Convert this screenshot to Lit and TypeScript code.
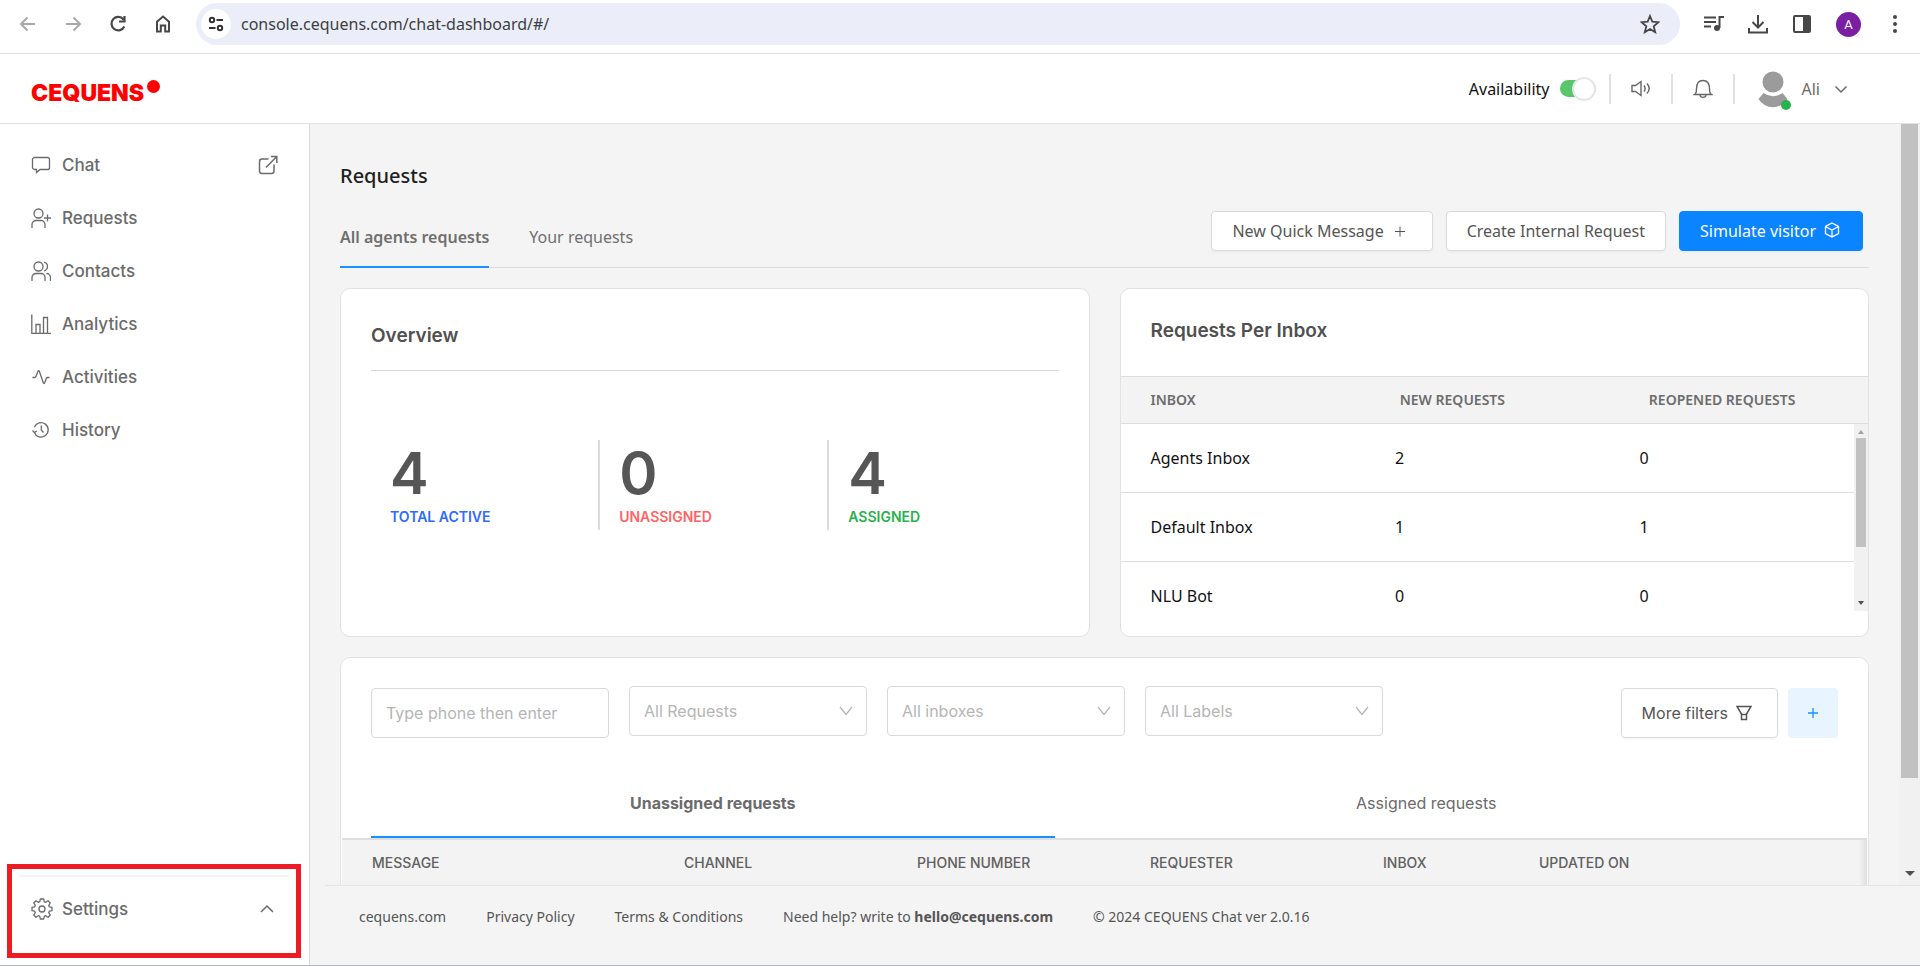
import { LitElement, html, css, svg, TemplateResult } from "lit";
import { customElement, state } from "lit/decorators.js";

const icon = (cls: string, size: number, body: TemplateResult) =>
  html`<svg class=${cls} width=${size} height=${size} viewBox="0 0 ${size} ${size}" aria-hidden="true">${body}</svg>`;

const navIcons: Record<string, TemplateResult> = {
  chat: svg`<path d="M3.500 2.500h13a2 2 0 0 1 2 2v8a2 2 0 0 1-2 2H9L5.500 17.500V14.500h-2a2 2 0 0 1-2-2v-8a2 2 0 0 1 2-2z"/>`,
  requests: svg`<circle cx="7.500" cy="5.500" r="4.500"/><path d="M1 20v-3.500a4 4 0 0 1 4-4h5a4 4 0 0 1 4 4V20M16.500 6.500v7M13 10h7"/>`,
  contacts: svg`<circle cx="7.500" cy="5.500" r="4.500"/><path d="M1 20v-3.500a4 4 0 0 1 4-4h5a4 4 0 0 1 4 4V20M13 1.200a4.400 4.400 0 0 1 0 8.600M15.500 12.500a4 4 0 0 1 4 4V20"/>`,
  analytics: svg`<path d="M.8 .5v19H20M5 19.500v-9h4v9M12.500 19.500V3.500h4v16"/>`,
  activities: svg`<path d="M1.500 10.500h2.200c.8 0 1-.4 1.300-1.200L7 4.200c.3-.8 1-.8 1.300 0l4 11.600c.3.900 1.100.9 1.400 0l1.600-4.300c.3-.8.700-1 1.400-1h1.800"/>`,
  history: svg`<path d="M3.300 12.500A7.200 7.200 0 1 0 3.300 7.200M3.300 12.500l-1.800-2.200M3.300 12.500l2.600-1.300M10.300 5.500V10l2.200 2.500"/>`,
  settings: svg`<path d="M9.300 1h3.400l.5 2.700 1.500.6 2.300-1.600 2.300 2.300-1.600 2.300.6 1.500 2.700.5v3.400l-2.700.5-.6 1.500 1.600 2.300-2.300 2.300-2.300-1.600-1.500.6-.5 2.700H9.300l-.5-2.700-1.500-.6L5 19.300 2.700 17l1.600-2.300-.6-1.500L1 12.700V9.300l2.700-.5.600-1.500L2.700 5 5 2.700l2.300 1.600 1.500-.6z" stroke-linejoin="round"/><circle cx="11" cy="11" r="3"/>`,
};

const navItems = [
  { id: "chat", label: "Chat", external: true },
  { id: "requests", label: "Requests" },
  { id: "contacts", label: "Contacts" },
  { id: "analytics", label: "Analytics" },
  { id: "activities", label: "Activities" },
  { id: "history", label: "History" },
];

const stats = [
  { value: 4, label: "TOTAL ACTIVE", tone: "blue" },
  { value: 0, label: "UNASSIGNED", tone: "red" },
  { value: 4, label: "ASSIGNED", tone: "green" },
];

const inboxes = [
  { name: "Agents Inbox", fresh: 2, reopened: 0 },
  { name: "Default Inbox", fresh: 1, reopened: 1 },
  { name: "NLU Bot", fresh: 0, reopened: 0 },
];

const selects = ["All Requests", "All inboxes", "All Labels"];

const columns = [
  { label: "MESSAGE", cls: "c-message" },
  { label: "CHANNEL", cls: "c-mid" },
  { label: "PHONE NUMBER", cls: "c-mid" },
  { label: "REQUESTER", cls: "c-mid" },
  { label: "INBOX", cls: "c-inbox" },
  { label: "UPDATED ON", cls: "c-updated" },
];

const base = css`
  :host { display: block; }
  * { box-sizing: border-box; }
  button, input, select { font: inherit; color: inherit; margin: 0; }
  button { background: none; border: 0; padding: 0; cursor: pointer; }
  a { color: inherit; text-decoration: none; }
  svg { display: block; flex: none; fill: none; stroke: currentColor; }
`;

@customElement("browser-bar")
class BrowserBar extends LitElement {
  static styles = [base, css`
    .bar { display: flex; align-items: center; height: 54px; padding: 0 17px 5px 18px; background: #fff; border-bottom: 1px solid #dfe1e5; color: #474747; }
    .nav { display: flex; gap: 25px; margin-right: 23px; }
    .off { color: #a9a9a9; }
    .thin { stroke-width: 2; }
    .omni { flex: 1; display: flex; align-items: center; height: 42px; border-radius: 21px; background: #ebeef8; padding: 0 20px 0 5px; }
    .site { width: 30px; height: 30px; border-radius: 50%; background: #fff; display: grid; place-items: center; margin-right: 10px; color: #333; }
    .url { flex: 1; min-width: 0; padding: 0; border: 0; outline: 0; background: none; color: #3c3f43; font: 16px/24px "Noto Sans", sans-serif; }
    .tools { display: flex; align-items: center; gap: 24px; margin-left: 24px; }
    .me { width: 25px; height: 25px; border-radius: 50%; background: #7b1fa2; color: #fff; font: 13px/25px Roboto, sans-serif; text-align: center; }
    .solid { fill: currentColor; stroke: none; }
    .menu { width: 18px; display: grid; justify-items: center; }
  `];

  render() {
    return html`<div class="bar">
      <div class="nav">
        <button class="off" aria-label="Back">${icon("thin", 20, svg`<path d="M17 10H3M9.500 3.500L3 10l6.500 6.500"/>`)}</button>
        <button class="off" aria-label="Forward">${icon("thin", 20, svg`<path d="M3 10h14M10.500 3.500L17 10l-6.500 6.500"/>`)}</button>
        <button aria-label="Reload">${icon("thin", 20, svg`<path d="M15.500 5.500A6.700 6.700 0 1 0 16.300 12.500M16.500 2v5.500H11" stroke-width="2.200"/>`)}</button>
        <button aria-label="Home">${icon("thin", 20, svg`<path d="M4 17.500V7.800l6-5.300 6 5.300v9.700h-3.800v-6H7.800v6z" stroke-width="2"/>`)}</button>
      </div>
      <div class="omni">
        <button class="site" aria-label="Site information">${icon("thin", 18, svg`<circle cx="5" cy="5" r="2.200"/><path d="M9.500 5H16M2 13h6.500"/><circle cx="13" cy="13" r="2.200"/>`)}</button>
        <input class="url" aria-label="Address" .value=${"console.cequens.com/chat-dashboard/#/"} />
        <button aria-label="Bookmark">${icon("", 20, svg`<path d="M10 2l2.300 5.700 6 .5-4.600 4 1.500 6L10 15l-5.200 3.200 1.500-6-4.600-4 6-.5z" stroke-width="1.800"/>`)}</button>
      </div>
      <div class="tools">
        <button aria-label="Media">${icon("thin", 20, svg`<path d="M0 3.500h12M0 8h12M0 12.500h7"/><path d="M15.500 14V3H20" /><circle cx="13" cy="14" r="3" class="solid"/>`)}</button>
        <button aria-label="Downloads">${icon("thin", 20, svg`<path d="M10 1v12M4.500 8l5.500 5.500L15.500 8M1 14v4.500h18V14"/>`)}</button>
        <button aria-label="Side panel">${icon("thin", 20, svg`<rect x="2" y="2" width="16" height="16" rx="1"/><path class="solid" d="M11 2h7v16h-7z"/>`)}</button>
        <button class="me" aria-label="Profile">A</button>
        <button class="menu" aria-label="Menu">${icon("solid", 20, svg`<circle cx="10" cy="3" r="2"/><circle cx="10" cy="10" r="2"/><circle cx="10" cy="17" r="2"/>`)}</button>
      </div>
    </div>`;
  }
}

@customElement("top-header")
class TopHeader extends LitElement {
  static styles = [base, css`
    .head { display: flex; align-items: center; height: 70px; padding: 0 72px 0 31px; background: #fff; border-bottom: 1px solid #e4e4e4; font: 16px/24px "Noto Sans", sans-serif; }
    .logo { display: flex; align-items: flex-start; gap: 3px; margin-right: auto; padding-top: 8px; color: #f00; font: 900 23px/26px Inter, sans-serif; }
    .dot { width: 13px; height: 13px; border-radius: 50%; background: #f00; }
    .avail { display: flex; align-items: center; gap: 10px; margin-right: 13px; color: #111; }
    .switch { appearance: none; width: 36px; height: 17px; border-radius: 9px; background: #bbb; display: flex; align-items: center; justify-content: flex-end; cursor: pointer; }
    .switch:checked { background: #58c76b; }
    .switch::before { content: ""; flex: none; width: 20px; height: 20px; border-radius: 50%; background: #fff; border: 2px solid #e6e6e6; }
    .sep { width: 2px; height: 30px; background: #e0e0e0; }
    .group { display: flex; align-items: center; color: #666; }
    .slot { width: 60px; display: grid; place-items: center; }
    .user { display: flex; align-items: center; margin-left: 19px; color: #6b6b6b; }
    .avatar { position: relative; margin-right: 10px; }
    .online { position: absolute; right: 1px; bottom: -2px; width: 10px; height: 10px; border-radius: 50%; background: #26b34b; }
    .face { fill: #9b9b9b; stroke: none; }
    .down { margin-left: 14px; }
  `];

  render() {
    return html`<header class="head">
      <a class="logo" href="#/">CEQUENS<span class="dot"></span></a>
      <label class="avail">Availability <input class="switch" type="checkbox" role="switch" checked /></label>
      <div class="group">
        <span class="sep"></span>
        <button class="slot" aria-label="Sound">${icon("", 20, svg`<path d="M1 6.500h3.500L10 2.500v14l-5.500-4H1zM13 6.500c1.300 1.800 1.300 4.200 0 6M16 4.500c2.600 3 2.600 7 0 10" stroke-width="1.400"/>`)}</button>
        <span class="sep"></span>
        <button class="slot" aria-label="Notifications">${icon("", 20, svg`<path d="M1.500 15.500c1.700-1 2-3 2-5.500 0-5.500 2-8.500 6.500-8.500s6.500 3 6.500 8.500c0 2.500.3 4.500 2 5.500zM7 16c.3 3.200 5.700 3.200 6 0" stroke-width="1.400"/>`)}</button>
        <span class="sep"></span>
      </div>
      <button class="user">
        <span class="avatar">${icon("face", 38, svg`<circle cx="19" cy="12" r="10.500"/><path d="M9.500 23a16 16 0 0 0 19 0l5 6a17 17 0 0 1-29 0z"/>`)}<span class="online"></span></span>
        Ali ${icon("down", 14, svg`<path d="M1.500 4.500l5.500 5.500 5.500-5.500" stroke-width="1.500"/>`)}
      </button>
    </header>`;
  }
}

@customElement("side-nav")
class SideNav extends LitElement {
  static styles = [base, css`
    :host { display: flex; }
    .side { flex: 1; display: flex; flex-direction: column; justify-content: space-between; padding-top: 14px; background: #fff; border-right: 1px solid #d9d9d9; color: #6b6b6b; font: 500 17px/24px Inter, sans-serif; }
    .list { list-style: none; margin: 0; padding: 0; }
    .item { display: flex; align-items: center; width: 100%; height: 53px; padding: 0 31px; }
    .ico { width: 20px; margin-right: 11px; display: grid; place-items: center; }
    .line { stroke-width: 1.300; }
    .end { margin-left: auto; }
    .mark { height: 94px; margin: 0 8px 7px 7px; padding: 6px 7px; border: 5px solid #ed1c24; }
    .rule { height: 2px; background: #f4f4f4; }
    .settings { display: flex; align-items: center; width: 100%; height: 64px; padding: 0 15px 0 12px; font: inherit; }
  `];

  render() {
    return html`<nav class="side" aria-label="Main">
      <ul class="list">
        ${navItems.map((n) => html`<li><a class="item" href="#/${n.id}">
          <span class="ico">${icon("line", 20, navIcons[n.id])}</span>${n.label}
          ${n.external ? icon("line end", 20, svg`<path d="M10.500 4H4a2.500 2.500 0 0 0-2.500 2.500V16A2.500 2.500 0 0 0 4 18.500h9.500A2.500 2.500 0 0 0 16 16V9.500M13 1.500h5.800V8M18.800 1.500L8 12.500" stroke-width="1.500"/>`) : ""}
        </a></li>`)}
      </ul>
      <div class="mark">
        <div class="rule"></div>
        <button class="settings">
          <span class="ico">${icon("line", 22, navIcons.settings)}</span>Settings
          ${icon("line end", 14, svg`<path d="M1 10l6-6 6 6" stroke-width="1.500"/>`)}
        </button>
      </div>
    </nav>`;
  }
}

@customElement("requests-page")
class RequestsPage extends LitElement {
  @state() private tab = 0;
  static styles = [base, css`
    :host { flex: 1; min-width: 0; display: flex; }
    .page { flex: 1; min-width: 0; padding: 38px 30px 0; font: 16px/24px "Noto Sans", sans-serif; }
    .title { margin: 0; font-weight: 500; font-size: 20px; line-height: 28px; color: #1f1f1f; }
    .bar { display: flex; align-items: flex-end; justify-content: space-between; height: 78px; border-bottom: 1px solid #dcdcdc; }
    .tabs { display: flex; gap: 40px; margin-bottom: -1px; }
    .tab { padding-bottom: 17px; border-bottom: 2px solid transparent; color: #6f6f6f; }
    .tab.on { border-color: #1890ff; font-weight: 600; }
    .actions { display: flex; gap: 13px; padding: 0 6px 16px 0; }
    .btn { display: flex; align-items: center; justify-content: center; gap: 8px; height: 40px; padding: 0 20px; background: #fff; border: 1px solid #d9d9d9; border-radius: 4px; box-shadow: 0 2px 2px rgba(0, 0, 0, 0.03); color: #555; white-space: nowrap; }
    .primary { background: #0a84ff; border-color: #0a84ff; color: #fff; }
    .cards { display: grid; grid-template-columns: 1fr 1fr; gap: 30px; margin-top: 20px; }
    .card { background: #fff; border: 1px solid #e2e2e2; border-radius: 10px; }
    .h2 { margin: 0; font: 600 19px/24px Inter, sans-serif; color: #505050; }
    .overview { padding: 35px 30px; }
    .overview .h2 { padding-bottom: 22px; border-bottom: 1px solid #d9d9d9; }
    .stats { display: grid; grid-template-columns: repeat(3, 1fr); margin: 69px 0 0; }
    .stat { height: 90px; padding: 2px 0 0 19px; border-right: 2px solid #dcdcdc; font-family: Inter, sans-serif; display: flex; flex-direction: column-reverse; justify-content: flex-end; }
    .stat:last-child { border: 0; }
    .num { margin: 0; font-weight: 600; font-size: 58px; line-height: 62px; color: #565656; }
    .lab { font-weight: 600; font-size: 14px; line-height: 26px; }
    .blue { color: #2e6bff; }
    .red { color: #ff6464; }
    .green { color: #26b34b; }
    .inboxes { padding-bottom: 25px; }
    .inboxes .h2 { padding: 30px 30px 33px; }
    table { width: 100%; border-collapse: separate; border-spacing: 0; table-layout: fixed; }
    th, td { text-align: left; padding: 0 0 0 30px; font-weight: 400; }
    .heads th { height: 48px; background: #f3f3f3; border: 1px solid #dcdcdc; border-width: 1px 0; font-weight: 600; font-size: 14px; color: #6c6c6c; }
    .scroll { display: flex; height: 187px; overflow: hidden; color: #111; }
    .scroll table { align-self: flex-start; }
    .scroll td { height: 69px; border-bottom: 1px solid #dedede; }
    .mini { flex: none; width: 14px; display: flex; flex-direction: column; align-items: center; justify-content: space-between; padding: 6px 0; background: #f1f1f1; }
    .thumb { width: 10px; height: 109px; margin: 0 0 auto; background: #c1c1c1; }
    .up, .dn { border: 3px solid transparent; border-top: 0; border-bottom: 4px solid #a3a3a3; margin-bottom: 4px; }
    .dn { border-bottom: 0; border-top: 4px solid #505050; margin-bottom: 0; }
    .list { margin-top: 20px; padding-top: 28px; border-radius: 10px 10px 0 0; font-family: Inter, sans-serif; }
    .filters { display: flex; align-items: flex-start; gap: 20px; padding: 0 30px; }
    .field { position: relative; width: 238px; color: #b5b5b5; }
    .box { display: block; width: 100%; height: 50px; padding: 0 14px; background: #fff; border: 1px solid #d9d9d9; border-radius: 4px; appearance: none; outline: 0; }
    .box::placeholder { color: #b5b5b5; opacity: 1; }
    .caret { position: absolute; right: 14px; top: 18px; pointer-events: none; stroke-width: 1.300; }
    .low { margin-top: 2px; }
    .right { display: flex; gap: 10px; margin-left: auto; }
    .more { height: 50px; padding-right: 25px; }
    .add { width: 50px; height: 50px; border-radius: 4px; background: #e8f4ff; color: #1890ff; display: grid; place-items: center; }
    .halves { display: grid; grid-template-columns: 1fr 1fr; gap: 30px; margin: 49px 100px 0 30px; }
    .half { height: 51px; padding-bottom: 17px; color: #6b6b6b; border-bottom: 2px solid transparent; }
    .half.on { font-weight: 700; border-color: #1890ff; }
    .rows { border-top: 2px solid #dedede; margin: 0 1px; width: calc(100% - 2px); background: linear-gradient(to right, #f3f3f3 calc(100% - 8px), #dedede); }
    .rows th { height: 46px; font-weight: 500; font-size: 14px; color: #606060; }
    .c-message { width: 312px; }
    .c-mid { width: 233px; }
    .c-inbox { width: 156px; }
  `];

  render() {
    return html`<main class="page">
      <h1 class="title">Requests</h1>
      <div class="bar">
        <div class="tabs" role="tablist">
          ${["All agents requests", "Your requests"].map((t, i) => html`<button class="tab ${i === this.tab ? "on" : ""}" role="tab" aria-selected=${i === this.tab} @click=${() => (this.tab = i)}>${t}</button>`)}
        </div>
        <div class="actions">
          <button class="btn">New Quick Message ${icon("", 20, svg`<path d="M8 5.500v10M3 10.500h10"/>`)}</button>
          <button class="btn">Create Internal Request</button>
          <button class="btn primary">Simulate visitor ${icon("", 18, svg`<path d="M8 1l6.500 3.500v7L8 15l-6.500-3.500v-7zM1.500 4.500L8 8l6.500-3.500M8 8v7" stroke-width="1.300"/>`)}</button>
        </div>
      </div>
      <div class="cards">
        <section class="card overview">
          <h2 class="h2">Overview</h2>
          <dl class="stats">
            ${stats.map((s) => html`<div class="stat"><dt class="lab ${s.tone}">${s.label}</dt><dd class="num">${s.value}</dd></div>`)}
          </dl>
        </section>
        <section class="card inboxes">
          <h2 class="h2">Requests Per Inbox</h2>
          <table class="heads"><thead><tr><th>INBOX</th><th>NEW REQUESTS</th><th>REOPENED REQUESTS</th></tr></thead></table>
          <div class="scroll">
            <table aria-label="Requests per inbox"><tbody>
              ${inboxes.map((r) => html`<tr><td>${r.name}</td><td>${r.fresh}</td><td>${r.reopened}</td></tr>`)}
            </tbody></table>
            <div class="mini"><span class="up"></span><span class="thumb"></span><span class="dn"></span></div>
          </div>
        </section>
      </div>
      <section class="card list">
        <div class="filters">
          <div class="field low"><input class="box" type="text" placeholder="Type phone then enter" aria-label="Phone" /></div>
          ${selects.map((s) => html`<div class="field"><select class="box" aria-label=${s}><option>${s}</option></select>${icon("caret", 14, svg`<path d="M1 3l6 7.500L13 3"/>`)}</div>`)}
          <div class="right low">
            <button class="btn more">More filters ${icon("", 16, svg`<path d="M1 1.500h14l-4.500 7.500v5.500h-5V9zM5.500 9.500h5" stroke-width="1.500"/>`)}</button>
            <button class="add" aria-label="Add filter">${icon("", 12, svg`<path d="M6 1v10M1 6h10" stroke-width="1.300"/>`)}</button>
          </div>
        </div>
        <div class="halves" role="tablist">
          <button class="half on" role="tab" aria-selected="true">Unassigned requests</button>
          <button class="half" role="tab" aria-selected="false">Assigned requests</button>
        </div>
        <table class="rows"><thead><tr>${columns.map((c) => html`<th class=${c.cls}>${c.label}</th>`)}</tr></thead></table>
      </section>
    </main>`;
  }
}

@customElement("app-root")
class AppRoot extends LitElement {
  static styles = [base, css`
    .app { display: flex; flex-direction: column; height: 100vh; overflow: hidden; background: #f4f4f4; border-bottom: 1px solid #b5b8c0; }
    .body { flex: 1; min-height: 0; display: flex; }
    .side { flex: none; width: 310px; }
    .main { flex: 1; min-width: 0; display: flex; flex-direction: column; }
    .view { flex: 1; min-height: 0; display: flex; overflow: hidden; }
    .track { flex: none; width: 21px; display: flex; flex-direction: column; align-items: center; justify-content: space-between; background: #f1f1f1; padding-bottom: 9px; }
    .thumb { width: 17px; height: 87%; background: #c1c1c1; }
    .arrow { border: 5px solid transparent; border-bottom: 0; border-top-color: #505050; }
    .foot { display: flex; flex: none; gap: 40px; height: 80px; margin-left: 15px; padding: 19px 34px; border-top: 1px solid #e4e4e4; color: #555; font: 14px/24px "Noto Sans", sans-serif; white-space: nowrap; }
  `];

  render() {
    return html`<div class="app">
      <browser-bar></browser-bar>
      <top-header></top-header>
      <div class="body">
        <side-nav class="side"></side-nav>
        <div class="main">
          <div class="view">
            <requests-page></requests-page>
            <div class="track"><span class="thumb"></span><span class="arrow"></span></div>
          </div>
          <footer class="foot">
            <a href="#">cequens.com</a><a href="#">Privacy Policy</a><a href="#">Terms &amp; Conditions</a>
            <span>Need help? write to <b>hello@cequens.com</b></span><span>© 2024 CEQUENS Chat ver 2.0.16</span>
          </footer>
        </div>
      </div>
    </div>`;
  }
}
